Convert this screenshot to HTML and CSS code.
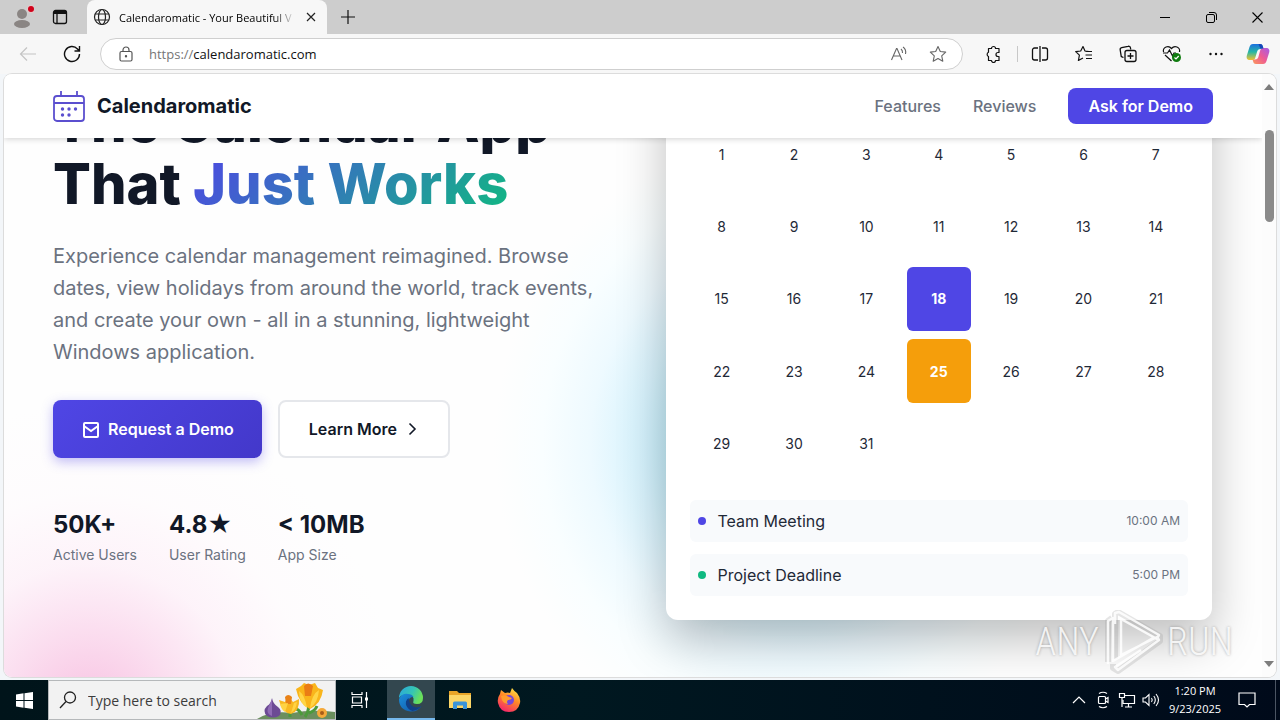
FILE: index.html
```html
<!DOCTYPE html>
<html lang="en">
<head>
<meta charset="utf-8">
<title>Calendaromatic - Your Beautiful Windows Calendar</title>
<link rel="stylesheet" href="styles.css">
</head>
<body>
<div class="desktop">
  <header class="titlebar">
    <button class="profile" aria-label="Profile">
      <svg width="24" height="24" viewBox="0 0 24 24"><circle cx="12" cy="9" r="5" fill="#8a8583"/><ellipse cx="12" cy="19" rx="8" ry="4" fill="#8a8583"/><circle cx="21" cy="4" r="4" fill="#e3c9c9"/><circle cx="21" cy="4" r="3" fill="#d0021b"/></svg>
    </button>
    <button class="tab-actions" aria-label="Tab actions">
      <svg width="16" height="16" viewBox="0 0 16 16" fill="none" stroke="#111" stroke-width="1.3"><rect x="1.5" y="1.5" width="13" height="13" rx="2"/><path d="M2 3.5h12" stroke-width="3"/><path d="M5 4v10"/></svg>
    </button>
    <div class="tab">
      <svg width="18" height="18" viewBox="0 0 18 18" fill="none" stroke="#222" stroke-width="1.2"><circle cx="9" cy="9" r="7.5"/><ellipse cx="9" cy="9" rx="3.5" ry="7.5"/><path d="M2.2 6h13.6M2.2 12h13.6"/></svg>
      <span class="tab-title">Calendaromatic - Your Beautiful V</span>
      <button class="tab-close" aria-label="Close tab"><svg width="10" height="10" viewBox="0 0 10 10" stroke="#222" stroke-width="1.2"><path d="M1 1l8 8M9 1L1 9"/></svg></button>
    </div>
    <button class="new-tab" aria-label="New tab"><svg width="14" height="14" viewBox="0 0 14 14" stroke="#111" stroke-width="1.2"><path d="M7 0v14M0 7h14"/></svg></button>
    <div class="window-buttons">
      <button aria-label="Minimize"><svg width="10" height="10" viewBox="0 0 10 10" stroke="#000"><path d="M0 5.5h10"/></svg></button>
      <button aria-label="Restore"><svg width="11" height="11" viewBox="0 0 11 11" fill="none" stroke="#000"><rect x=".5" y="2.5" width="8" height="8" rx="1.5"/><path d="M3 .5h5a2.5 2.5 0 0 1 2.5 2.5v5"/></svg></button>
      <button aria-label="Close"><svg width="11" height="11" viewBox="0 0 11 11" stroke="#000" stroke-width="1.1"><path d="M.5.5l10 10M10.5.5l-10 10"/></svg></button>
    </div>
  </header>

  <div class="toolbar">
    <button class="tool" aria-label="Back"><svg width="18" height="16" viewBox="0 0 18 16" fill="none" stroke="#c4c4c4" stroke-width="1.2"><path d="M17 8H2M8 1.5L1.5 8 8 14.5"/></svg></button>
    <button class="tool" aria-label="Refresh"><svg width="18" height="18" viewBox="0 0 18 18" fill="none" stroke="#111" stroke-width="1.4"><path d="M16.500 9A7.500 7.500 0 1 1 14.500 3.900L16.500 6M16.500 1v5h-5"/></svg></button>
    <div class="address">
      <svg width="14" height="16" viewBox="0 0 14 16" fill="none" stroke="#555" stroke-width="1.2"><rect x="1" y="5.5" width="12" height="9.5" rx="1.5"/><path d="M4 5.5V4a3 3 0 0 1 6 0v1.5"/><circle cx="7" cy="10.2" r=".6" fill="#555"/></svg>
      <label class="scheme" for="url">https://</label>
      <input id="url" type="text" value="calendaromatic.com">
      <button class="in-address" aria-label="Read aloud"><svg width="18" height="16" viewBox="0 0 18 16" fill="none" stroke="#666" stroke-width="1.1"><path d="M1.5 14L6.5 2.5h.5L12 14M3.3 10h7M11 3q1.800 1.500 1.500 4M13 1q3.500 2.500 2.500 7"/></svg></button>
      <button class="in-address" aria-label="Add to favorites"><svg width="18" height="18" viewBox="0 0 18 18" fill="none" stroke="#666" stroke-width="1.1" stroke-linejoin="round"><path d="M9 1.500l2.300 5 5.400.6-4 3.700 1.100 5.400L9 13.500l-4.800 2.700 1.100-5.400-4-3.700 5.400-.6z"/></svg></button>
    </div>
    <button class="tool ext" aria-label="Extensions"><svg width="18" height="18" viewBox="0 0 18 18" fill="none" stroke="#111" stroke-width="1.2" stroke-linejoin="round"><path d="M4.500 3.500h3a2 2 0 0 1 4 0h3.500v4h-1a2 2 0 0 0 0 4h1v4h-3.500a2 2 0 0 1-4 0h-3v-4a2.300 2.300 0 0 1 0-4.200z"/></svg></button>
    <span class="divider"></span>
    <button class="tool" aria-label="Split screen"><svg width="18" height="18" viewBox="0 0 18 18" fill="none" stroke="#111" stroke-width="1.3"><path d="M7 3H3.500a2 2 0 0 0-2 2v8a2 2 0 0 0 2 2H7M9 1v16M11 3h3.500a2 2 0 0 1 2 2v8a2 2 0 0 1-2 2H11"/></svg></button>
    <button class="tool" aria-label="Favorites"><svg width="18" height="18" viewBox="0 0 18 18" fill="none" stroke="#111" stroke-width="1.2" stroke-linejoin="round"><path d="M14 6.500l-4-.5L8 1.500 5.700 6l-5 .6 3.700 3.500-1 5.400L8 13M10.500 6.500H17M10.500 10H17M11 13.500h6"/></svg></button>
    <button class="tool" aria-label="Collections"><svg width="18" height="18" viewBox="0 0 18 18" fill="none" stroke="#111" stroke-width="1.3"><path d="M4.500 12.500l-1-.3A2 2 0 0 1 2 10L1.200 5a2 2 0 0 1 1.500-2.300L9 1.300A2 2 0 0 1 11.500 3l.2 1.500"/><rect x="6" y="5.500" width="11" height="11" rx="2"/><path d="M11.500 8v6M8.500 11h6"/></svg></button>
    <button class="tool" aria-label="Browser essentials"><svg width="20" height="18" viewBox="0 0 20 18" fill="none" stroke="#111" stroke-width="1.2"><path d="M1.500 7C.5 2 6.500 0 9.500 3.500 12.500 0 18.500 2 17.500 7M3 10l6.500 6M1 8h4.500L7.500 5l3 6 1.500-3h2"/><circle cx="14.500" cy="12.500" r="4.500" fill="#107c10" stroke="none"/><path d="M12.500 12.500l1.500 1.500 2.700-3" stroke="#fff"/></svg></button>
    <button class="tool" aria-label="Settings and more"><svg width="14" height="4" viewBox="0 0 14 4" fill="#111"><circle cx="1.5" cy="2" r="1.2"/><circle cx="7" cy="2" r="1.2"/><circle cx="12.5" cy="2" r="1.2"/></svg></button>
    <button class="tool copilot" aria-label="Copilot">
      <svg width="24" height="22" viewBox="0 0 24 22">
        <defs>
          <linearGradient id="cpa" x1="0" y1="0" x2="0" y2="1"><stop offset="0" stop-color="#1b6fe0"/><stop offset=".5" stop-color="#26b7a5"/><stop offset="1" stop-color="#f2c230"/></linearGradient>
          <linearGradient id="cpb" x1="1" y1="0" x2="0" y2="1"><stop offset="0" stop-color="#a55be8"/><stop offset=".5" stop-color="#ee5a94"/><stop offset="1" stop-color="#fb9a5b"/></linearGradient>
        </defs>
        <path d="M7 1h7c2 0 2.500 1 3 3l.5 2h-3c-2 0-3 1-3.500 3L9.500 14c-.5 2-1 3-3 3H4c-3 0-4-2-3-5L3.500 4C4.200 2 5 1 7 1z" fill="url(#cpa)"/>
        <path d="M17 21h-7c-2 0-2.500-1-3-3l-.5-1.500H9c2 0 3-1 3.500-3L14 8c.5-2 1.500-3 3.500-3H20c3 0 4 2 3 5l-2.500 8c-.7 2-1.500 3-3.500 3z" fill="url(#cpb)"/>
        <path d="M14 1c2 0 2.500 1 3 3l.5 1.500h-3.200L12.500 1z" fill="#1647b8"/>
      </svg>
    </button>
  </div>

  <main class="viewport">
    <div class="page">
      <nav class="site-nav">
        <a class="brand" href="#">
          <svg width="32" height="32" viewBox="0 0 32 32" fill="none" stroke="#5b4fcf" stroke-width="1.8"><rect x="1" y="6" width="30" height="25" rx="3"/><path d="M1 13h30M8 1v5M24 1v5"/><g fill="#5b4fcf" stroke="none"><circle cx="9.5" cy="19" r="1.7"/><circle cx="16" cy="19" r="1.7"/><circle cx="22.5" cy="19" r="1.7"/><circle cx="9.5" cy="25" r="1.7"/><circle cx="16" cy="25" r="1.7"/></g></svg>
          <span>Calendaromatic</span>
        </a>
        <div class="nav-links">
          <a href="#">Features</a>
          <a href="#">Reviews</a>
          <a class="nav-cta" href="#">Ask for Demo</a>
        </div>
      </nav>

      <section class="hero">
        <div class="hero-copy">
          <h1>The Calendar App<br>That <span class="gradient">Just Works</span></h1>
          <p class="lead">Experience calendar management reimagined. Browse dates, view holidays from around the world, track events, and create your own - all in a stunning, lightweight Windows application.</p>
          <div class="actions">
            <button class="btn primary"><svg width="18" height="20" viewBox="0 0 18 20" fill="none" stroke="#fff" stroke-width="2"><rect x="2" y="4" width="14" height="14" rx="1"/><path d="M2 7l7 5 7-5"/></svg>Request a Demo</button>
            <button class="btn outline">Learn More<svg width="14" height="14" viewBox="0 0 14 14" fill="none" stroke="#111827" stroke-width="1.6"><path d="M4.500 1.500L10 7l-5.500 5.500"/></svg></button>
          </div>
          <div class="stats">
            <div><strong>50K+</strong><span>Active Users</span></div>
            <div><strong>4.8★</strong><span>User Rating</span></div>
            <div><strong>&lt; 10MB</strong><span>App Size</span></div>
          </div>
        </div>

        <div class="card">
          <div class="days">
            <span>1</span><span>2</span><span>3</span><span>4</span><span>5</span><span>6</span><span>7</span>
            <span>8</span><span>9</span><span>10</span><span>11</span><span>12</span><span>13</span><span>14</span>
            <span>15</span><span>16</span><span>17</span><span class="today">18</span><span>19</span><span>20</span><span>21</span>
            <span>22</span><span>23</span><span>24</span><span class="marked">25</span><span>26</span><span>27</span><span>28</span>
            <span>29</span><span>30</span><span>31</span>
          </div>
          <div class="events">
            <div class="event"><i class="dot indigo"></i><span>Team Meeting</span><time>10:00 AM</time></div>
            <div class="event"><i class="dot green"></i><span>Project Deadline</span><time>5:00 PM</time></div>
          </div>
        </div>
      </section>
    </div>
    <div class="scrollbar">
      <svg width="10" height="6" viewBox="0 0 10 6"><path d="M0 6l5-6 5 6z" fill="#7d7d7d"/></svg>
      <div class="track"><div class="thumb"></div></div>
      <svg width="10" height="6" viewBox="0 0 10 6"><path d="M0 0l5 6 5-6z" fill="#7d7d7d"/></svg>
    </div>
    <div class="watermark">
      <span>ANY</span>
      <svg width="60" height="64" viewBox="0 0 60 64" fill="none" stroke-linejoin="round">
        <g stroke="#999" stroke-opacity=".25" stroke-width="6"><path d="M12 49V4l3-2 42 24v5L15 61l-5-3V54M5 52V11l4-3"/></g>
        <g stroke="#fff" stroke-opacity=".85" stroke-width="2.500"><path d="M5 54V11l5-3v43l40-23M12 14V3l4-1 40 23-2 4-36-20v36l36-18 2 3-41 30-3-3 26-17"/></g>
      </svg>
      <span>RUN</span>
    </div>
  </main>

  <footer class="taskbar">
    <button class="start" aria-label="Start"><svg width="17" height="17" viewBox="0 0 17 17" fill="#fff"><path d="M0 2.500l7.500-1.200V8H0zM8.500 1.200L17 0v8H8.500zM0 9h7.500v6.700L0 14.500zM8.500 9H17v8l-8.500-1.200z"/></svg></button>
    <div class="search">
      <svg width="18" height="18" viewBox="0 0 18 18" fill="none" stroke="#222" stroke-width="1.3"><circle cx="11" cy="6.5" r="5.5"/><path d="M7 10.500L1 17"/></svg>
      <input type="text" placeholder="Type here to search" aria-label="Type here to search">
      <svg class="flowers" width="78" height="38" viewBox="0 0 78 38">
        <path d="M0 38q14-9 35-6 20-4 43-1v7z" fill="#6b8f5e"/>
        <path d="M33 36q0-10-2-14M48 36q6-8 2-18M45 34q-3-6-8-7M52 32q6-2 8-7" stroke="#4c9a3c" stroke-width="3" fill="none"/>
        <path d="M15 17q-1 6-5 8-5 5 0 10 6 3 12 0 4-5-1-9-5-3-6-9z" fill="#6c4a94"/><path d="M15 18v17q-6-2-4-8z" fill="#8f6bb5"/>
        <path d="M22 19l6 2 3-6 5 6 6-3q1 12-8 15-9-1-12-14z" fill="#f8b820"/><path d="M28 16q3-4 7 0l-1 7h-5z" fill="#e98217"/><path d="M31 22l-3 9q-4-3-5-8zM37 22l-3 10q5-3 6-11z" fill="#ffd343"/>
        <path d="M39 8l5-3 3-3 5 2 6-2 3 5 5 2q-2 14-13 19-11-5-14-20z" fill="#f9b51b"/><path d="M47 5q4-5 9 0l-2 10h-6z" fill="#ea7c15"/><path d="M42 10q6 4 8 17-8-5-8-17zM62 9q-7 4-9 18 8-5 9-18z" fill="#ffd546"/>
        <circle cx="65" cy="32" r="5" fill="#f5a93a"/><circle cx="65" cy="32" r="2" fill="#a85c18"/>
      </svg>
    </div>
    <button class="task" aria-label="Task view"><svg width="18" height="18" viewBox="0 0 18 18" fill="none" stroke="#fff" stroke-width="1.2"><path d="M1 1v2.500h10V1M1 17v-2.500h10V17M1.500 6h9v6h-9zM15.500 1v16"/><path d="M14 6.500h3v3h-3z" fill="#fff" stroke="none"/></svg></button>
    <button class="task active" aria-label="Microsoft Edge"><svg width="26" height="26" viewBox="0 0 26 26">
      <defs><linearGradient id="eg" x1="0" y1="0" x2="1" y2=".4"><stop offset="0" stop-color="#2aa6df"/><stop offset=".6" stop-color="#35c5b4"/><stop offset="1" stop-color="#6ae05a"/></linearGradient><linearGradient id="eb" x1="0" y1="0" x2="1" y2="1"><stop offset="0" stop-color="#1b8fdc"/><stop offset="1" stop-color="#1254a4"/></linearGradient></defs>
      <path d="M1 12A12 12 0 0 1 25 12q0 6-6 6-5 0-3.500-3 1-6-5.500-6Q4 8 1 12z" fill="url(#eg)"/>
      <path d="M1 13Q4 7 10 8q4 0 5.500 3-5 0-5 5 1 6 8 6 3 0 5-2-4 6-11 5.500Q1 24 1 13z" fill="url(#eb)"/>
      <path d="M10.500 12q-4 3-2 8 2 4 6 5 6-1 9-5-2 1.500-5 1.500-7-.5-8-9.500z" fill="#123f85"/></svg></button>
    <button class="task" aria-label="File Explorer"><svg width="22" height="20" viewBox="0 0 22 20"><path d="M0 1h8l2 2h12v15H0z" fill="#e9a528"/><path d="M0 5h22v13H0z" fill="#fcd667"/><path d="M4 19v-6q0-1.500 1.500-1.500h11Q18 11.500 18 13v6h-4v-3.500H8V19z" fill="#3b94d9"/></svg></button>
    <button class="task" aria-label="Firefox"><svg width="24" height="24" viewBox="0 0 24 24">
      <defs><linearGradient id="ff" x1=".8" y1="0" x2=".3" y2="1"><stop offset="0" stop-color="#ffe747"/><stop offset=".45" stop-color="#ff8a26"/><stop offset="1" stop-color="#f5246c"/></linearGradient></defs>
      <path d="M3 6l1-4 4 3q3-1 5 0l2-5q2 3 5 5 4 5 3 10-2 9-11 9T1 15Q0 10 3 6z" fill="url(#ff)"/><circle cx="12" cy="12" r="5" fill="#7748d8"/><path d="M4 8q4-2 8 1l3 1q-1 2-4 2-2 2 0 4-6 0-7-8z" fill="#ff9c2c"/></svg></button>
    <div class="tray">
      <svg width="24" height="20" viewBox="0 0 24 20" fill="none" stroke="#fff" stroke-width="1.2"><path d="M6 13l6-6 6 6"/></svg>
      <svg width="24" height="20" viewBox="0 0 24 20" fill="none" stroke="#fff" stroke-width="1.2"><rect x="7.5" y="6.5" width="7" height="7" rx="1"/><path d="M14.500 9l2.500-1.500v5L14.500 11M8 3.500q4-2.500 8 0M8 16.500q4 2.500 8 0"/></svg>
      <svg width="24" height="20" viewBox="0 0 24 20" fill="none" stroke="#fff" stroke-width="1.2"><path d="M10 5.500h9.500v8H8V10M13.500 13.500V17M10 17h7"/><path d="M4.500 3.500h5v4h-5zM7 7.500V17"/></svg>
      <svg width="24" height="20" viewBox="0 0 24 20" fill="none" stroke="#fff" stroke-width="1.1"><path d="M4 8h2.500L10 4.500v11L6.500 12H4zM12.500 8q1.500 2 0 4M14.800 6q3 4 0 8M17 4q5 6 0 12"/></svg>
      <div class="clock"><span>1:20 PM</span><span>9/23/2025</span></div>
      <button class="notify" aria-label="Notifications"><svg width="18" height="18" viewBox="0 0 18 18" fill="none" stroke="#fff" stroke-width="1.2"><path d="M1 2h16v11.500h-5.500L9 16l-2.500-2.500H1z"/></svg></button>
      <span class="show-desktop"></span>
    </div>
  </footer>
</div>
</body>
</html>
```

FILE: styles.css
```css
* { box-sizing: border-box; }

body {
  margin: 0;
  font-family: Inter, "Liberation Sans", sans-serif;
  color: #111827;
}

button {
  padding: 0;
  border: 0;
  background: none;
  font: inherit;
  color: inherit;
}

input {
  min-width: 0;
  padding: 0;
  border: 0;
  background: none;
  font: inherit;
  color: inherit;
  outline: 0;
}

a { color: inherit; text-decoration: none; }
svg { display: block; flex: none; }

.desktop {
  display: flex;
  flex-direction: column;
  height: 100vh;
  background: #f3f6f9;
}

/* Browser chrome */
.titlebar {
  display: flex;
  flex: none;
  height: 34px;
  background: #cdcdcd;
  font-family: "Open Sans", "Noto Sans", sans-serif;
}

.titlebar button { display: grid; place-items: center; }
.profile { width: 44px; }
.tab-actions { width: 32px; margin-right: 11px; }

.tab {
  display: flex;
  align-items: center;
  gap: 8px;
  width: 240px;
  padding: 0 8px 0 6px;
  border-radius: 8px 8px 0 0;
  background: #f7f7f7;
  font-size: 11px;
  color: #000;
}

.tab-title {
  flex: 1;
  overflow: hidden;
  white-space: nowrap;
  mask-image: linear-gradient(90deg, #000 88%, transparent);
}

.tab .tab-close { width: 16px; height: 24px; }
.new-tab { width: 42px; }
.window-buttons { display: flex; margin-left: auto; }
.window-buttons button { width: 46px; }

.toolbar {
  display: flex;
  flex: none;
  align-items: center;
  height: 40px;
  padding: 0 2px 0 6px;
  background: #f7f7f7;
  font-family: "Open Sans", "Noto Sans", sans-serif;
}

.tool {
  display: grid;
  flex: none;
  place-items: center;
  width: 44px;
  height: 32px;
}

.ext { margin: 0 2px 0 8px; }
.copilot { width: 40px; }
.divider { width: 1px; height: 16px; background: #c8c8c8; }

.address {
  display: flex;
  flex: 1;
  align-items: center;
  height: 32px;
  margin-left: 6px;
  padding: 0 5px 0 18px;
  border: 1px solid #cfcfcf;
  border-radius: 16px;
  background: #fff;
  font-size: 13px;
}

.scheme { margin-left: 16px; color: #767676; }
.address input { flex: 1; color: #111; }
.in-address { display: grid; place-items: center; width: 39px; height: 30px; }

/* Web page frame */
.viewport {
  position: relative;
  display: flex;
  flex: 1;
  min-height: 0;
  margin: 0 4px 3px;
  border-radius: 8px;
  background: #fff;
  box-shadow: 0 0 0 1px #dcdcdc;
  overflow: hidden;
}

.page {
  position: relative;
  flex: 1;
  overflow: hidden;
  background:
    radial-gradient(circle at 85px 640px, rgba(244, 160, 210, .65), rgba(247, 180, 220, .45) 80px, rgba(252, 215, 238, .28) 150px, rgba(255, 235, 247, .12) 220px, transparent 310px),
    radial-gradient(ellipse 300px 310px at 790px 370px, #a6e4f7 0, #b9e9f8 35%, #d8f3fd 52%, #eefaff 68%, #f9feff 84%, transparent),
    #fefefe;
}

.site-nav {
  position: absolute;
  inset: 0 0 auto;
  z-index: 2;
  display: flex;
  align-items: center;
  justify-content: space-between;
  height: 64px;
  padding: 0 49px;
  background: #fff;
  box-shadow: 0 1px 6px rgba(0, 0, 0, .18);
}

.brand {
  display: flex;
  align-items: center;
  gap: 12px;
  font-size: 20px;
  font-weight: 700;
}

.nav-links {
  display: flex;
  align-items: center;
  gap: 32px;
  font-size: 16px;
  font-weight: 500;
  color: #6b7280;
}

.nav-cta {
  padding: 8px 20px;
  border-radius: 8px;
  background: #4f46e5;
  color: #fff;
  font-weight: 600;
  line-height: 20px;
}

.hero {
  display: grid;
  grid-template-columns: 1fr 1fr;
  gap: 66px;
  align-items: start;
  padding: 0 50px 0 49px;
}

/* The page is scrolled: the first heading line sits under the nav bar */
.hero-copy { padding-top: 17px; }

h1 {
  margin: 0 0 25px;
  font-size: 56px;
  font-weight: 800;
  line-height: 62px;
  white-space: nowrap;
}

.gradient {
  background: linear-gradient(135deg, #4f46e5, #10b981);
  background-clip: text;
  color: transparent;
}

.lead {
  margin: 0 0 32px;
  font-size: 20px;
  line-height: 32px;
  color: #6b7280;
}

.actions { display: flex; gap: 16px; margin-bottom: 48px; }

.btn {
  display: flex;
  align-items: center;
  gap: 8px;
  height: 58px;
  border-radius: 8px;
  font-size: 16px;
  font-weight: 600;
}

.primary {
  padding: 0 28px 0 29px;
  background: linear-gradient(135deg, #4f46e5, #4338ca);
  color: #fff;
  box-shadow: 0 4px 12px rgba(79, 70, 229, .35);
}

.outline {
  padding: 0 29px;
  border: 2px solid #e5e7eb;
  background: #fff;
}

.stats { display: flex; gap: 32px; }
.stats div { display: flex; flex-direction: column; }
.stats strong { font-size: 24px; line-height: 38px; }
.stats span { font-size: 14px; line-height: 22px; color: #6b7280; }

.card {
  padding: 48px 24px 24px;
  border-radius: 0 0 12px 12px;
  background: #fff;
  box-shadow: 0 20px 48px rgba(0, 0, 0, .25);
}

.days {
  display: grid;
  grid-template-columns: repeat(7, 1fr);
  gap: 8px;
}

.days span {
  display: grid;
  place-items: center;
  aspect-ratio: 1;
  border-radius: 6px;
  font-size: 14px;
  color: #1f2937;
}

.days .today { background: #4f46e5; color: #fff; font-weight: 700; }
.days .marked { background: #f59e0b; color: #fff; font-weight: 700; }

.events { display: grid; gap: 12px; margin-top: 24px; }

.event {
  display: flex;
  align-items: center;
  gap: 12px;
  padding: 8px;
  border-radius: 6px;
  background: #f8fafc;
  font-size: 16px;
  line-height: 26px;
  color: #1f2937;
}

.event time { margin-left: auto; font-size: 12px; color: #6b7280; }
.dot { width: 8px; height: 8px; border-radius: 50%; }
.indigo { background: #4f46e5; }
.green { background: #10b981; }

.scrollbar {
  display: flex;
  flex: none;
  flex-direction: column;
  align-items: center;
  gap: 4px;
  width: 14px;
  padding: 10px 0;
  background: #fcfcfc;
}

.track { flex: 1; padding-top: 36px; }
.thumb { width: 9px; height: 92px; border-radius: 5px; background: #8a8a8a; }

.watermark {
  position: absolute;
  right: 43px;
  bottom: 3px;
  z-index: 3;
  display: flex;
  align-items: center;
  gap: 4px;
  font-family: "Roboto Condensed", "Liberation Sans Narrow", Roboto, sans-serif;
  font-size: 38px;
  font-weight: 300;
  color: rgba(255, 255, 255, .85);
  text-shadow: 0 0 3px rgba(0, 0, 0, .3);
}

/* Windows taskbar */
.taskbar {
  display: flex;
  flex: none;
  height: 40px;
  background: linear-gradient(90deg, #00141a, #001820 45%, #000a1a);
  color: #fff;
  font-family: "Open Sans", "Noto Sans", sans-serif;
}

.taskbar button { display: grid; place-items: center; width: 48px; }

.search {
  display: flex;
  align-items: center;
  gap: 11px;
  width: 288px;
  padding-left: 10px;
  border: 1px solid #b5b8ba;
  background: #f2f2f2;
  color: #333;
  font-size: 14px;
}

.search input { flex: 1; }
.search input::placeholder { color: #3c3c3c; opacity: 1; }

.task { margin-right: 1px; }
.task.active { margin-left: 2px; border-bottom: 2px solid #76b9ed; background: #33474f; }

.tray { display: flex; align-items: center; margin-left: auto; }

.clock {
  display: flex;
  flex-direction: column;
  align-items: center;
  width: 64px;
  font-size: 11px;
  line-height: 18px;
}

.taskbar .notify { width: 40px; height: 40px; }
.show-desktop { width: 5px; height: 40px; margin-left: 8px; border-left: 1px solid #4b5563; }
```
